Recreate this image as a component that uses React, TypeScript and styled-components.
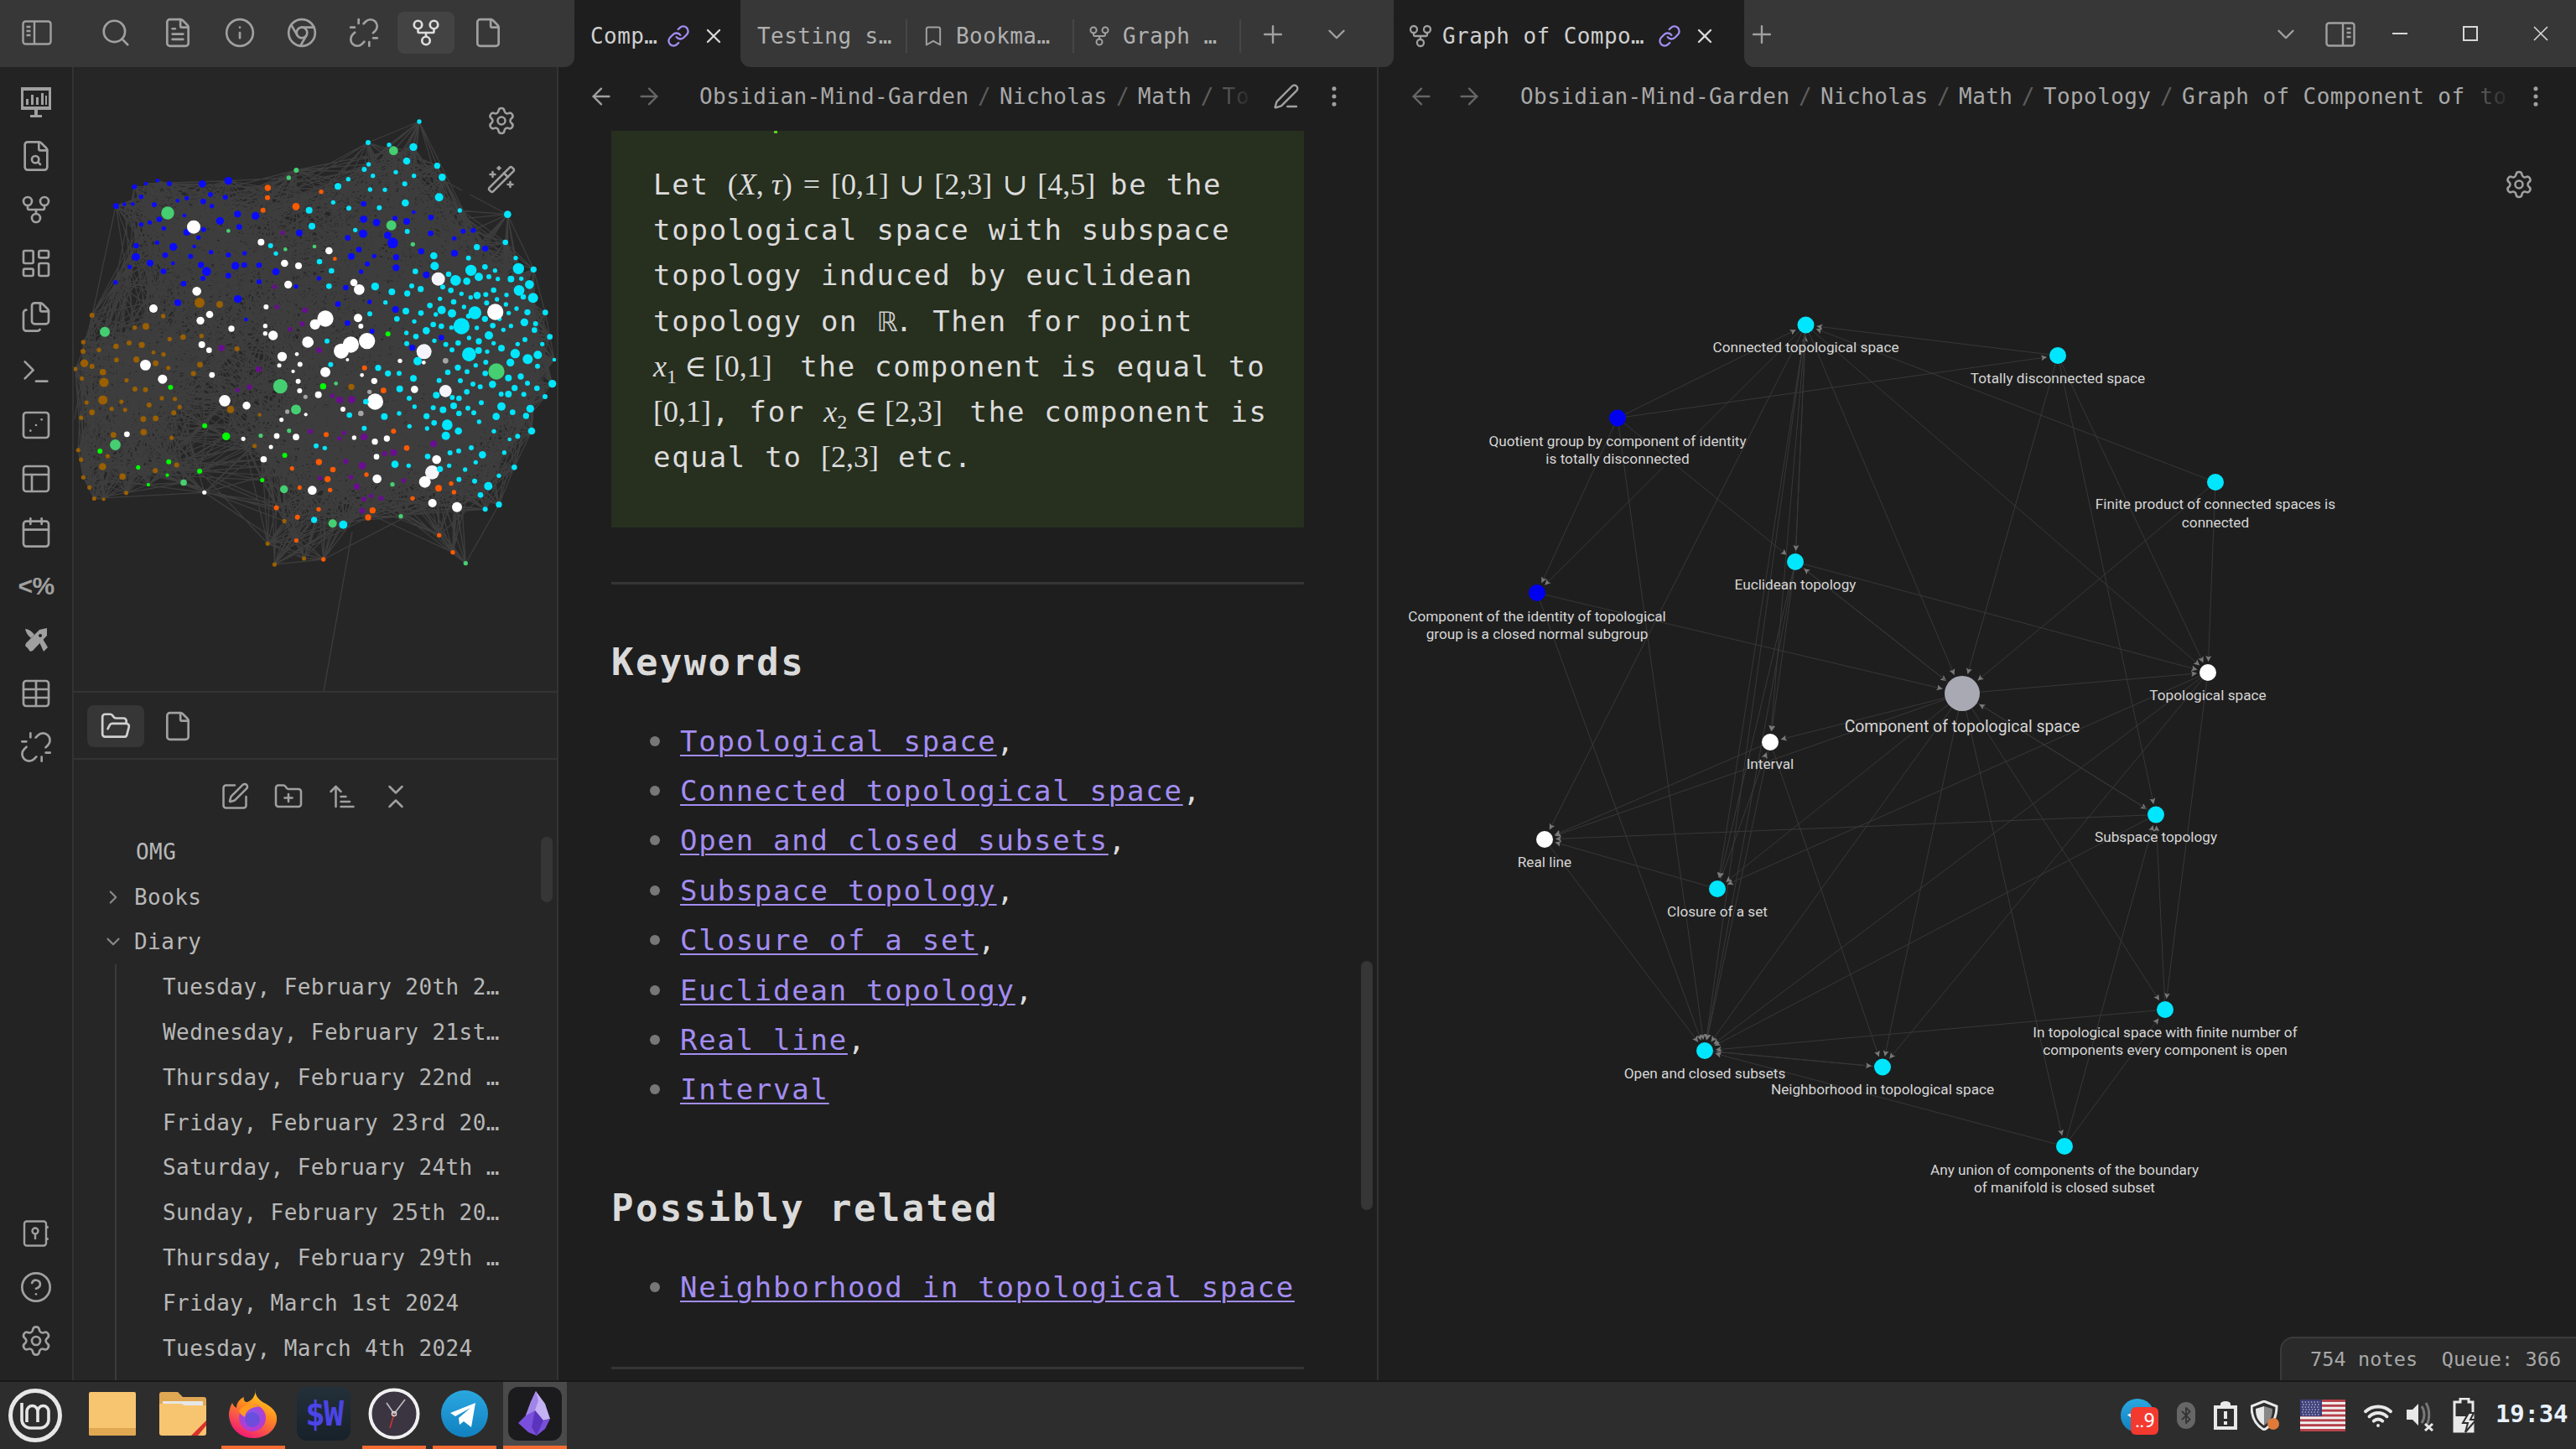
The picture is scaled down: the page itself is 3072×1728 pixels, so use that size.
import React from "react";
import styled, { createGlobalStyle } from "styled-components";
import {
  Search, FileText, Info, Chrome, Unlink, GitFork, File, FileSearch, LayoutDashboard, Files, Terminal, Dice3,
  PanelsTopLeft, Calendar, Table, CircleHelp, Settings, FolderOpen, SquarePen, FolderPlus, ArrowUpNarrowWide,
  ChevronsDownUp, ChevronRight, ChevronDown, WandSparkles, Link, PenLine, EllipsisVertical, ArrowLeft, ArrowRight,
  Plus, X, Bookmark, Wifi, Bluetooth,
} from "lucide-react";

const MONO = `"DejaVu Sans Mono", "Liberation Mono", monospace`;
const GREY = "#a0a0a0";
const ACCENT = "#a38df2";

const Global = createGlobalStyle`
  html, body { margin: 0; padding: 0; background: #1e1e1e; }
  * { box-sizing: border-box; }
  ul { margin: 0; padding: 0; list-style: none; }
`;

const Page = styled.div`
  width: 3072px; height: 1728px; overflow: hidden; display: flex; flex-direction: column;
  background: #1e1e1e; font-family: ${MONO}; color: #dcdcdc;
`;

/* ---------- title bar ---------- */
const TitleBar = styled.div`display: flex; height: 80px; background: #1e1e1e; flex: none;`;
const LeftSeg = styled.div`
  width: 685px; background: #373737; border-radius: 0 0 12px 0; display: flex; padding-top: 14px; align-items: flex-start; gap: 6px;
`;
const ToolSpacer = styled.div`width: 4px; flex: none;`;
const ToolBtn = styled.div<{ $on?: boolean; $w?: number }>`
  width: ${(p) => p.$w ?? 68}px; height: 50px; border-radius: 8px; display: flex; align-items: center; justify-content: center;
  color: ${(p) => (p.$on ? "#dcdcdc" : GREY)}; background: ${(p) => (p.$on ? "#434343" : "transparent")};
`;
const ActiveTab = styled.div<{ $w: number; $pad: number }>`
  width: ${(p) => p.$w}px; height: 66px; margin-top: 14px; background: #1e1e1e; border-radius: 16px 16px 0 0;
  display: flex; align-items: center; padding: 0 0 8px ${(p) => p.$pad}px; flex: none; color: ${GREY};
`;
const TabText = styled.span<{ $dim?: boolean }>`
  font-size: 26px; letter-spacing: 0.42px; white-space: nowrap; color: ${(p) => (p.$dim ? "#b0b0b0" : "#cfcfcf")};
`;
const TabLink = styled.span<{ $gap: number }>`margin-left: ${(p) => p.$gap}px; display: flex; color: ${ACCENT};`;
const TabClose = styled.span`margin-left: 14px; display: flex; color: #d8d8d8;`;
const TabIcon = styled.span`display: flex; margin-right: 10px;`;
const Strip = styled.div<{ $grow?: boolean; $radius: string }>`
  background: #373737; display: flex; align-items: center; height: 80px;
  border-radius: ${(p) => p.$radius}; ${(p) => (p.$grow ? "flex: 1;" : "width: 779px; flex: none;")}
`;
const Tab = styled.div<{ $pad: number; $gap?: number }>`
  width: 199px; height: 40px; display: flex; align-items: center; border-right: 2px solid #464646; overflow: hidden;
  padding-left: ${(p) => p.$pad}px; gap: ${(p) => p.$gap ?? 0}px; color: ${GREY}; flex: none; margin-top: 6px;
`;
const StripBtn = styled.div<{ $w: number }>`
  width: ${(p) => p.$w}px; display: flex; justify-content: center; align-items: center; color: ${GREY}; flex: none; margin-top: 2px;
`;
const WinBtn = styled.div`width: 84px; display: flex; justify-content: center; align-items: center; color: #d8d8d8; flex: none; margin-top: -1px;`;
const Spacer = styled.div`flex: 1;`;
const PaneGap = styled.div`flex: 0 0 2px;`;

/* ---------- workspace ---------- */
const Workspace = styled.div`flex: 1; display: flex; min-height: 0;`;
const Ribbon = styled.div`
  width: 88px; flex: none; background: #232323; border-right: 2px solid #333; display: flex; flex-direction: column;
  justify-content: space-between; padding: 10px 0 15px;
`;
const RibbonGroup = styled.div`display: flex; flex-direction: column;`;
const RibbonBtn = styled.div`height: 64.1px; display: flex; align-items: center; justify-content: center; color: ${GREY};`;
const PercentIcon = styled.span`font-family: "Liberation Sans", sans-serif; font-weight: 700; font-size: 30px; color: ${GREY}; letter-spacing: -0.5px;`;

const Sidebar = styled.div`
  width: 578px; flex: none; background: #262626; border-right: 2px solid #333; display: flex; flex-direction: column; position: relative; min-height: 0;
`;
const GraphBox = styled.div`height: 746px; position: relative; overflow: hidden; border-bottom: 2px solid #333; flex: none;`;
const GraphControls = styled.div`
  position: absolute; top: 0; right: 0; width: 113px; height: 152px; background: #262626; padding: 46px 0 0 28px; color: ${GREY};
  display: flex; flex-direction: column; gap: 34px;
`;
const FileTabs = styled.div`height: 80px; flex: none; border-bottom: 2px solid #333; display: flex; align-items: center; padding: 2px 0 0 16px; gap: 6px;`;
const FileTabBtn = styled.div<{ $on?: boolean }>`
  width: 68px; height: 50px; border-radius: 8px; display: flex; align-items: center; justify-content: center;
  background: ${(p) => (p.$on ? "#363636" : "transparent")}; color: ${(p) => (p.$on ? "#d0d0d0" : GREY)};
`;
const NavRow = styled.div`height: 82px; flex: none; display: flex; align-items: center; padding: 6px 0 0 174px; gap: 28px; color: ${GREY};`;
const Tree = styled.div`flex: 1; min-height: 0; overflow: hidden; display: grid; grid-auto-rows: 53.8px; padding-top: 1px;`;
const TreeRow = styled.div<{ $pad: number }>`
  display: flex; align-items: center; padding-left: ${(p) => p.$pad}px; font-size: 26px; letter-spacing: 0.42px; color: #b8b8b8; white-space: nowrap; gap: 12px;
`;
const TreeChildren = styled.div`margin-left: 49px; border-left: 2px solid #3a3a3a; grid-row: span 10; display: grid; grid-auto-rows: 53.8px;`;
const Chevron = styled.span`display: flex; color: #8a8a8a;`;
const ScrollThumb = styled.div<{ $x: number; $y: number; $w: number; $h: number }>`
  position: absolute; left: ${(p) => p.$x}px; top: ${(p) => p.$y}px; width: ${(p) => p.$w}px; height: ${(p) => p.$h}px;
  border-radius: 7px; background: #363636;
`;

const NotePane = styled.div`
  width: 978px; flex: none; border-right: 2px solid #333; position: relative; overflow: hidden; background: #1e1e1e;
`;
const Header = styled.div`height: 76px; display: flex; align-items: center; padding-bottom: 6px; color: #9a9a9a;`;
const NavArrow = styled.span<{ $dim?: boolean; $w: number }>`
  width: ${(p) => p.$w}px; display: flex; justify-content: center; color: ${(p) => (p.$dim ? "#666" : "#a0a0a0")}; flex: none;
  svg { flex: none; }
`;
const CrumbGap = styled.span<{ $w: number }>`flex: 0 0 ${(p) => p.$w}px;`;
const Crumb = styled.span`font-size: 26px; letter-spacing: 0.42px; color: #a8a8a8; white-space: nowrap;`;
const Slash = styled.span`font-size: 26px; color: #5c5c5c; width: 36.5px; text-align: center; flex: none;`;
const FadeCrumb = styled(Crumb)<{ $w: number; $left?: number }>`
  width: ${(p) => p.$w}px; margin-left: ${(p) => p.$left ?? 0}px; flex: none;
  -webkit-mask-image: linear-gradient(90deg, rgba(0,0,0,.45), rgba(0,0,0,.03));
  mask-image: linear-gradient(90deg, rgba(0,0,0,.45), rgba(0,0,0,.03));
`;
const HeadBtn = styled.span<{ $w: number }>`width: ${(p) => p.$w}px; display: flex; justify-content: center; color: ${GREY}; flex: none;`;
const NoteBody = styled.div`padding-left: 63px; width: 889px; font-size: 34px; letter-spacing: 1.74px;`;
const Callout = styled.div`background: #272f1f; padding: 37px 0 57px 50px; position: relative; height: 473px;`;
const Speck = styled.i`position: absolute; left: 194px; top: 0; width: 4px; height: 3px; background: #5fd01f;`;
const Line = styled.div`height: 54.2px; line-height: 54.2px; white-space: pre; color: #dcdcdc;`;
const MathSpan = styled.span<{ $w: number }>`
  display: inline-block; width: ${(p) => p.$w}px; font-family: "Liberation Serif", "DejaVu Serif", serif; font-size: 36px; letter-spacing: 0;
  white-space: nowrap; vertical-align: baseline; line-height: 1;
`;
const Var = styled.em`font-style: italic;`;
const Op = styled.span<{ $m: number }>`margin: 0 ${(p) => p.$m}px;`;
const Lower = styled.sub`font-size: 24px; line-height: 0; font-style: normal;`;
const Blackboard = styled.span`font-family: "DejaVu Sans", sans-serif; letter-spacing: 0; font-size: 32px; color: #cfcfcf; display: inline-block; width: 22.2px;`;
const Rule = styled.div<{ $top: number }>`height: 3px; background: #353535; margin-top: ${(p) => p.$top}px;`;
const Heading = styled.h2<{ $top: number }>`
  margin: ${(p) => p.$top}px 0 34px; height: 60px; line-height: 60px; font-size: 44px; font-weight: 700; letter-spacing: 2.4px; color: #dadada;
`;
const Item = styled.li`height: 59.4px; display: flex; align-items: center; padding-left: 46px; gap: 24px; white-space: pre;`;
const Dot = styled.i`width: 12px; height: 12px; border-radius: 50%; background: #777; flex: none;`;
const NoteLink = styled.span`color: ${ACCENT}; text-decoration: underline; text-underline-offset: 4px; text-decoration-thickness: 2px;`;

const GraphPane = styled.div`flex: 1; min-width: 0; position: relative; display: flex; flex-direction: column; background: #1e1e1e;`;
const GraphGear = styled.div`position: absolute; right: 50px; top: 122px; color: ${GREY}; display: flex;`;
const StatusBar = styled.div`
  position: absolute; right: 0; bottom: 0; width: 353px; height: 52px; background: #2a2a2a; border: 2px solid #3a3a3a; border-width: 2px 0 0 2px;
  border-radius: 16px 0 0 0; padding-left: 34px; display: flex; align-items: center; font-size: 23.5px; letter-spacing: 0.1px; color: #a8a8a8; white-space: pre;
`;

/* ---------- taskbar ---------- */
const Taskbar = styled.div`
  height: 82px; flex: none; background: #2d2d2d; border-top: 2px solid #181818; display: flex; align-items: stretch;
`;
const MintSlot = styled.div`width: 90px; display: flex; align-items: center; padding-left: 9px; flex: none;`;
const Apps = styled.div`display: flex; gap: 8px; margin-left: 6px;`;
const AppSlot = styled.div<{ $run?: boolean; $on?: boolean }>`
  width: 76px; position: relative; display: flex; align-items: center; justify-content: center; padding-bottom: 4px; background: ${(p) => (p.$on ? "#4a4a4a" : "transparent")};
  &::after { content: ""; position: absolute; left: 0; right: 0; bottom: 0; height: 4px; background: ${(p) => (p.$run ? "#f56b32" : "transparent")}; }
`;
const Tray = styled.div`margin-left: auto; display: flex; align-items: center;`;
const TrayItem = styled.div<{ $w: number }>`width: ${(p) => p.$w}px; display: flex; justify-content: center; align-items: center; position: relative; color: #e8e8e8;`;
const TgBadge = styled.span`
  position: absolute; left: 22px; top: 10px; width: 33px; height: 33px; background: #f4392f; border-radius: 6px; color: #fff;
  font-family: "Roboto", sans-serif; font-size: 24px; line-height: 32px; text-align: center; letter-spacing: -1px;
`;
const BtPill = styled.span`width: 22px; height: 32px; border-radius: 11px; background: #666; display: flex; align-items: center; justify-content: center; color: #333;`;
const TrayClock = styled.span`font-size: 29px; font-weight: 700; color: #e8f1fb; padding-left: 5px; letter-spacing: -0.2px; width: 101px; white-space: nowrap; margin-top: -4px;`;
const DollarW = styled.span`font-family: "DejaVu Sans Mono", monospace; font-weight: 700; font-size: 40px; color: #4b44e6; letter-spacing: -2px;`;
const TileRound = styled.div`width: 64px; height: 64px; border-radius: 12px; background: linear-gradient(180deg,#243039,#17212a); display: flex; align-items: center; justify-content: center;`;

/* ---------- sidebar graph data ---------- */
type Node = { x: number; y: number; r: number; c: string };
const BLUE = "#0a0aff", CY = "#00e6ff", GR = "#45cf72", WH = "#ffffff", PU = "#6a0d91", BR = "#9a5f00", OR = "#ff5a00", LI = "#00ff00", GY = "#a5a5a5", SN = "#f4f4fa";
const nodes: Node[] = [];
const add = (ox: number, oy: number, sx: number, sy: number, c: string, data: string) => {
  data.trim().split(/;\s*/).forEach((t) => {
    if (!t) return;
    const [a, b, r] = t.split(",").map(Number);
    nodes.push({ x: ox + a / sx, y: oy + b / sy, r: r / ((sx + sy) / 2), c });
  });
};
// upper left
add(80,130,3,3,BLUE,"241,278,9;282,267,7;323,256,7;366,267,9;484,268,13;577,257,14;265,314,8;312,342,9;395,328,7;428,319,8;513,306,9;487,331,10;566,316,9;518,347,8;175,347,10;205,341,7;235,340,7;420,381,7;330,395,10;296,406,8;265,413,8;346,427,8;610,376,12;674,382,14;547,400,14;488,431,9;616,422,10;428,441,12;470,460,8;322,478,8;247,489,10;380,493,14;455,492,7;515,512,8;635,516,8;351,523,10;246,529,14;442,527,9;577,522,9;831,443,12;297,551,12;379,552,7;224,565,8;479,558,11;602,561,14;634,558,10;687,559,10;499,581,16;345,581,10;747,582,13;486,606,9;577,596,10;173,620,8;417,625,10;687,618,9;819,635,8;396,693,12;611,680,14;640,753,7");
add(80,130,3,3,GR,"360,372,23;577,436,7;793,246,8;820,219,9;135,797,18;781,502,7;885,492,7");
add(80,130,3,3,OR,"718,282,11;717,317,9;701,362,9;819,349,13");
add(80,130,3,3,CY,"866,362,12;876,419,12;728,489,9;747,517,8");
add(80,130,3,3,WH,"453,422,24;694,476,12;778,552,13;828,561,12;791,628,14;464,652,16;712,708,9;309,714,15;510,735,13;477,757,14;709,776,8;588,786,11;709,803,8;737,810,17;482,843,12;508,863,10;861,834,20;887,770,18;769,885,16;822,877,7");
add(80,130,3,3,PU,"771,443,8;742,636,8;751,708,8;851,720,10;841,769,9;798,788,8;553,855,11");
add(80,130,3,3,BR,"474,693,18;546,699,12;89,738,9;344,741,8;282,778,12;242,782,8;481,812,8;415,816,10;367,823,8;58,834,8;267,844,11;222,837,9;175,849,10;114,862,8;57,867,9;309,871,7;345,878,8;608,858,9;248,895,10;177,897,8");
// upper right
add(370,130,3,3,CY,"390,45,8;207,120,9;282,128,8;369,136,14;345,186,13;209,198,8;193,216,9;454,203,11;472,244,13;224,239,8;306,226,8;371,239,8;136,251,8;99,277,12;338,268,9;214,288,8;267,289,8;461,316,15;82,334,8;340,336,13;138,355,9;247,353,9;535,363,8;706,377,13;347,438,9;161,433,8;698,477,10;596,494,11;442,525,13;566,533,9;735,533,8;445,562,15;33,546,10;76,579,10;376,581,10;625,565,10;575,577,20;661,578,8;745,571,20;799,574,11;495,591,10;603,601,15;639,600,9;520,613,19;560,616,13;671,608,8;718,608,12;755,607,8;784,628,16;67,634,10;232,635,14;474,637,9;363,633,9;395,644,11;503,649,10;656,648,10;292,654,12;347,660,11;747,649,19;797,676,18;541,661,8;597,667,13;628,664,9;574,674,8;702,665,8;762,672,10;464,679,8;513,690,10;668,681,8;631,694,9;700,699,8;269,692,8;428,703,10;550,708,8;738,714,8;342,723,12;470,719,15;507,731,15;589,729,23;396,730,10;777,727,11;710,730,8;449,735,8;841,728,10;213,733,9;310,751,10;566,741,9;625,751,11;372,760,8;677,751,8;541,777,29;440,771,10;469,777,10;505,782,8;766,763,14;806,768,9;718,776,8;653,775,10;596,783,8;691,790,8;802,791,10;415,793,13;344,801,8");
add(370,130,3,3,BLUE,"191,339,10;370,369,7;303,391,9;432,388,10;191,394,13;237,406,13;345,402,12;547,437,9;583,434,9;431,445,10;189,446,15;134,461,10;277,452,13;295,479,19;515,463,8;174,503,10;626,499,11;147,527,12;229,526,8;307,530,11;397,509,11;516,516,12;204,554,9;307,568,12;182,582,8;415,593,12;31,606,8;127,639,10;99,698,10;212,690,8;305,717,12;133,766,10;221,795,9");
add(370,130,3,3,GR,"298,149,16;290,416,18;367,484,8");
add(370,130,3,3,OR,"39,296,8;88,536,7");
add(370,130,3,3,WH,"67,507,13;156,621,13;175,646,19;662,726,29;54,750,29;17,771,18;171,748,15;181,777,9");
add(370,130,3,3,SN,"458,608,24");
add(370,130,3,3,LI,"278,805,9");
// lower right
add(370,400,3,3,WH,"0,25,12;145,33,29;111,56,27;203,20,29;133,87,6;321,91,8;406,97,7;54,131,18;185,142,7;229,163,11;373,193,13;29,212,12;232,237,29;117,264,9;157,366,8;231,380,11;274,369,11;237,434,10;452,444,16;410,524,21;239,513,16;7,554,16;437,600,15;525,614,18");
add(370,400,3,3,SN,"407,58,27;484,199,22;436,490,25");
add(370,400,3,3,GY,"484,91,10;212,202,8;181,279,10");
add(370,400,3,3,PU,"32,53,10;79,216,8;105,231,12;148,230,13;120,349,8;104,369,8;192,363,12;2,344,8;441,388,12;266,423,9;298,419,12;127,451,9;186,466,13;35,511,8;146,507,8;334,519,8;166,541,11;218,574,8;253,583,9;192,586,9;186,627,10");
add(370,400,3,3,BR,"147,184,11");
add(370,400,3,3,LI,"46,182,11");
add(370,400,3,3,GR,"92,172,7;666,129,29;294,533,8;324,647,8;80,673,15;556,815,8");
add(370,400,3,3,OR,"194,116,9;262,197,10;57,355,9;298,343,9;345,403,10;31,453,11;81,480,10;201,498,8;62,514,11;71,553,8;459,547,12;504,530,8;514,561,8;366,583,8;30,622,8;223,626,11;207,651,11;461,715,8;510,776,8;47,801,8");
add(370,400,3,3,BLUE,"469,8,10;365,44,11");
add(370,400,3,3,CY,"60,20,9;345,29,9;378,4,10;444,19,8;485,32,9;529,27,10;507,52,9;568,9,8;603,21,11;639,0,15;656,28,8;684,46,12;742,31,8;768,15,9;830,31,8;857,5,10;568,68,25;602,54,12;633,58,8;733,65,17;814,70,15;778,85,18;873,87,7;716,97,14;813,110,9;73,104,9;384,92,15;592,107,8;628,96,9;243,116,11;278,136,11;318,136,9;492,132,10;528,115,11;561,130,9;626,136,10;709,152,12;753,147,11;369,154,12;461,161,9;537,162,9;582,174,9;608,184,9;652,175,13;731,188,11;777,171,9;811,189,10;866,173,14;320,191,12;451,214,12;560,202,10;683,210,9;709,210,12;764,211,9;840,219,9;354,225,9;508,222,9;532,225,10;612,241,9;199,237,10;373,255,8;440,259,9;475,266,12;513,252,12;564,260,9;684,254,15;787,262,14;140,285,10;265,290,12;318,279,8;416,289,11;532,279,10;585,277,9;665,290,13;724,275,10;772,288,11;443,313,10;490,320,19;604,309,8;355,325,8;418,333,8;193,332,9;530,342,13;485,359,15;657,343,8;792,342,13;742,361,9;713,372,7;21,395,9;52,403,8;576,402,9;531,413,9;500,420,9;694,419,8;420,433,10;616,427,13;303,461,13;352,466,8;592,454,8;497,466,8;464,478,11;730,472,10;554,480,8;675,502,8;532,515,9;588,521,9;637,539,15;609,571,10;675,605,11;626,622,9;14,660,11;118,677,15");
// lower left, from the wider crop
const Z4X = 2.306, Z4Y = 2.376;
add(0,400,Z4X,Z4Y,WH,"400,84,15;776,60,13;825,82,7;768,85,6;806,102,5;447,124,13;583,112,8;820,130,7;824,157,7;618,185,16;678,199,11;349,280,8;669,293,6;761,285,8;814,288,9;745,316,6;725,351,9;841,224,5;774,239,6;562,445,6");
add(0,400,Z4X,Z4Y,BR,"232,79,11;375,69,8;320,70,6;253,88,7;428,79,8;283,104,9;550,83,8;463,92,6;225,122,6;348,127,6;532,108,7;286,133,13;207,95,6;400,154,7;371,152,7;445,178,6;481,180,6;283,183,13;238,190,6;334,188,6;410,197,7;253,218,8;307,208,6;344,211,6;494,203,6;634,210,10;478,219,7;714,225,5;223,233,6;394,237,8;428,235,8;312,282,8;395,274,9;472,290,6;700,313,6;215,325,6;223,352,6;296,342,6;282,372,10;486,367,7;427,383,7;229,402,6;337,400,9;246,431,6;347,446,6;259,462,6;285,464,5;782,526,6;736,590,6;836,632,6;755,649,6");
add(0,400,Z4X,Z4Y,PU,"653,155,6;686,146,7;711,96,8;852,272,6");
add(0,400,Z4X,Z4Y,GR,"771,144,20;317,310,15;717,284,6;795,270,6;814,210,14;781,436,11;505,417,9");
add(0,400,Z4X,Z4Y,LI,"469,147,7;563,256,7;622,286,11;275,328,7;380,374,6;464,358,7;549,385,7;460,396,5;408,423,5;721,410,6;783,340,7");
add(0,400,Z4X,Z4Y,OR,"803,377,6;824,431,6;760,488,7;818,515,7;815,581,6");
add(0,400,Z4X,Z4Y,GY,"840,174,6;790,216,6");

const buildEdges = () => {
  let seed = 12345;
  const rnd = () => { seed = (seed * 1103515245 + 12345) & 0x7fffffff; return seed / 0x7fffffff; };
  let d = "M420 634L385 830M244 587L330 605M138 246L110 376M110 376L89 500M372 640L340 655";
  nodes.forEach((n, i) => {
    const near: number[] = [], mid: number[] = [];
    nodes.forEach((m, j) => {
      if (i === j) return;
      const dist = Math.hypot(m.x - n.x, m.y - n.y);
      if (dist < 62) near.push(j); else if (dist < 150) mid.push(j);
    });
    const pick = (arr: number[], k: number) => {
      for (let t = 0; t < k && arr.length; t++) {
        const m = nodes[arr[Math.floor(rnd() * arr.length)]];
        d += `M${n.x.toFixed(1)} ${n.y.toFixed(1)}L${m.x.toFixed(1)} ${m.y.toFixed(1)}`;
      }
    };
    pick(near, 5); pick(mid, 8);
  });
  return d;
};
const EDGE_PATH = buildEdges();

const SideGraph = () => (
  <svg width={578} height={744} viewBox="88 80 578 744" style={{ display: "block" }}>
    <path d={EDGE_PATH} stroke="#3d3d3d" strokeWidth={1.3} fill="none" />
    {nodes.map((n, i) => <circle key={i} cx={n.x} cy={n.y} r={n.r} fill={n.c} />)}
  </svg>
);

/* ---------- local graph ---------- */
type GN = { x: number; y: number; r: number; c: string; l: string[]; ly: number[]; big?: boolean };
const G: Record<string, GN> = {
  C: { x: 2153.5, y: 387.5, r: 10, c: CY, l: ["Connected topological space"], ly: [414] },
  T: { x: 2454, y: 424, r: 10, c: CY, l: ["Totally disconnected space"], ly: [451] },
  Q: { x: 1929, y: 498.5, r: 10, c: "#0000f0", l: ["Quotient group by component of identity", "is totally disconnected"], ly: [526, 547] },
  F: { x: 2642, y: 575, r: 10, c: CY, l: ["Finite product of connected spaces is", "connected"], ly: [601, 623] },
  E: { x: 2141, y: 670, r: 10, c: CY, l: ["Euclidean topology"], ly: [697] },
  I: { x: 1833, y: 707, r: 10, c: "#0000f0", l: ["Component of the identity of topological", "group is a closed normal subgroup"], ly: [735, 756] },
  M: { x: 2340, y: 827, r: 21, c: "#a9a9b4", l: ["Component of topological space"], ly: [866], big: true },
  P: { x: 2633, y: 802, r: 10, c: WH, l: ["Topological space"], ly: [829] },
  V: { x: 2111, y: 885, r: 10, c: WH, l: ["Interval"], ly: [911] },
  R: { x: 1842, y: 1001, r: 10, c: WH, l: ["Real line"], ly: [1028] },
  S: { x: 2571, y: 971.6, r: 10, c: CY, l: ["Subspace topology"], ly: [998] },
  L: { x: 2048, y: 1060, r: 10, c: CY, l: ["Closure of a set"], ly: [1087] },
  O: { x: 2033, y: 1253, r: 10, c: CY, l: ["Open and closed subsets"], ly: [1280] },
  N: { x: 2245, y: 1272.5, r: 10, c: CY, l: ["Neighborhood in topological space"], ly: [1299] },
  A: { x: 2582, y: 1204, r: 10, c: CY, l: ["In topological space with finite number of", "components every component is open"], ly: [1231, 1252] },
  U: { x: 2462, y: 1367, r: 10, c: CY, l: ["Any union of components of the boundary", "of manifold is closed subset"], ly: [1395, 1416] },
};
const GE = "T>C Q>C Q>T F>C Q>E Q>I C>I Q>O I>O C>R E>C C>E C>V C>L C>O C>M C>P T>M T>P T>S F>M F>P E>P E>M M>E I>M M>P M>V M>S S>M M>R V>R S>R L>R R>O V>O L>V M>L P>L S>O P>O M>O M>N V>N N>O O>N A>O U>O U>A U>S A>S M>A M>U P>N P>A E>V E>L E>O".split(" ");

const LocalGraph = () => (
  <svg width={1428} height={1490} viewBox="1644 156 1428 1490" style={{ display: "block" }}>
    <defs>
      <marker id="ah" markerWidth="8" markerHeight="8" refX="7" refY="4" orient="auto" markerUnits="userSpaceOnUse">
        <path d="M0 0.5L7 4L0 7.5L1.5 4Z" fill="#7a7a7a" />
      </marker>
    </defs>
    {GE.map((e) => {
      const [a, b] = e.split(">").map((k) => G[k]);
      const len = Math.hypot(b.x - a.x, b.y - a.y);
      const k = (len - b.r - 3) / len;
      return <line key={e} x1={a.x} y1={a.y} x2={a.x + (b.x - a.x) * k} y2={a.y + (b.y - a.y) * k} stroke="#383838" strokeWidth={1} markerEnd="url(#ah)" />;
    })}
    {Object.entries(G).map(([k, n]) => (
      <g key={k}>
        <circle cx={n.x} cy={n.y} r={n.r} fill={n.c} />
        {n.l.map((t, i) => (
          <text key={i} x={n.x} y={n.ly[i] + (n.big ? 7 : 6)} textAnchor="middle" fontFamily="Roboto, sans-serif" fontSize={n.big ? 19.4 : 17.2} fill="#d6d6d6">{t}</text>
        ))}
      </g>
    ))}
  </svg>
);

/* ---------- drawn icons ---------- */
const SidebarToggle = ({ mirror }: { mirror?: boolean }) => (
  <svg width="36" height="30" viewBox="0 0 36 30" fill="none" stroke="currentColor" strokeWidth="2.4" style={mirror ? { transform: "scaleX(-1)" } : undefined}>
    <rect x="1.5" y="1.5" width="33" height="27" rx="3" />
    <path d="M15 1.5V28.5" />
    <path d="M5.5 8H10.5M5.5 13H10.5M5.5 18H10.5" strokeWidth="2.6" />
  </svg>
);
const Presentation = () => (
  <svg width="36" height="36" viewBox="0 0 36 36" fill="currentColor">
    <path d="M0 0H36V27H0ZM3 4V23H33V4Z" fillRule="evenodd" />
    <path d="M6 14H9V21H6ZM12 9H15V21H12ZM18 12H21V21H18ZM24 7H27V21H24ZM29 10H31V21H29Z" />
    <path d="M16 27H20V33H25V36H11V33H16Z" />
  </svg>
);
const ToolsCross = () => (
  <svg width="30" height="30" viewBox="0 0 30 30" fill="currentColor">
    <path d="M28 1L28 10L11 28L8 29L5 25L2 22L3 19L19 3Z" />
    <path d="M2 2C6 2 10 5 13 9L9 13C5 10 3 6 2 2Z" />
    <path d="M19 18L23 14L29 24L24 29Z" />
    <path d="M20 8A2 2 0 1 0 20.1 8Z" fill="#232323" />
  </svg>
);
const Vault = () => (
  <svg width="32" height="32" viewBox="0 0 32 32" fill="none" stroke="currentColor" strokeWidth="2.4">
    <rect x="2" y="1.5" width="26" height="29" rx="3" />
    <circle cx="15" cy="13" r="3.5" /><path d="M15 17V23M29.5 7V10M29.5 21V24" />
  </svg>
);
const Minimize = () => <svg width="20" height="4" viewBox="0 0 20 4"><path d="M1 2H19" stroke="currentColor" strokeWidth="2" /></svg>;
const Maximize = () => <svg width="20" height="20" viewBox="0 0 20 20"><rect x="2" y="2" width="16" height="16" fill="none" stroke="currentColor" strokeWidth="2" /></svg>;
const CloseWin = () => <svg width="20" height="20" viewBox="0 0 20 20"><path d="M2 2L18 18M18 2L2 18" stroke="currentColor" strokeWidth="1.6" /></svg>;

const MintLogo = () => (
  <svg width="66" height="66" viewBox="0 0 66 66" fill="none" stroke="#e6e6e6">
    <circle cx="33" cy="33" r="29.5" strokeWidth="5" />
    <path d="M17 18V38a10 10 0 0 0 10 10H39a10 10 0 0 0 10-10V28a6.5 6.5 0 0 0-13 0V41M36 28a6.5 6.5 0 0 0-13 0V41" strokeWidth="3.6" />
  </svg>
);
const FilesApp = () => (
  <svg width="56" height="54" viewBox="0 0 56 54"><rect width="56" height="52" y="1" rx="2" fill="#f7c470" /><path d="M0 44H56V51a2 2 0 0 1-2 2H2a2 2 0 0 1-2-2Z" fill="#e1a853" /></svg>
);
const FolderApp = () => (
  <svg width="56" height="52" viewBox="0 0 56 52"><path d="M0 3a3 3 0 0 1 3-3H22L28 6H53a3 3 0 0 1 3 3V20H0Z" fill="#e1a853" /><rect x="4" y="11" width="48" height="10" fill="#e6e6e6" /><path d="M0 14H26L30 16H56V49a3 3 0 0 1-3 3H3a3 3 0 0 1-3-3Z" fill="#f7c470" /><path d="M38 52L56 34V40L46 52Z" fill="#d9322a" /></svg>
);
const Firefox = () => (
  <svg width="58" height="60" viewBox="0 0 58 60">
    <defs>
      <linearGradient id="ffa" x1="0.8" y1="0" x2="0.3" y2="1"><stop offset="0" stopColor="#ffe226" /><stop offset="0.45" stopColor="#ff8a1f" /><stop offset="1" stopColor="#f0157a" /></linearGradient>
      <radialGradient id="ffb" cx="0.5" cy="0.4"><stop offset="0" stopColor="#7a5cf0" /><stop offset="1" stopColor="#b53bd0" /></radialGradient>
    </defs>
    <path d="M32 0C30 8 36 14 44 18C54 24 58 30 57 38C55 51 43 59 29 59C13 59 1 47 0 32C0 26 2 20 4 17C5 20 7 22 9 23C9 17 13 12 18 10C17 14 19 16 22 16C28 14 32 8 32 0Z" fill="url(#ffa)" />
    <circle cx="28" cy="35" r="16" fill="url(#ffb)" />
    <path d="M12 27C17 19 28 16 36 22C30 21 20 25 19 34C16 32 13 30 12 27Z" fill="#ff9a1f" />
    <circle cx="28" cy="37" r="9" fill="#5b4fd8" opacity=".7" />
  </svg>
);
const ClockApp = () => (
  <svg width="62" height="62" viewBox="0 0 62 62" fill="none">
    <circle cx="31" cy="31" r="28.5" fill="#3b3542" stroke="#f0f0f0" strokeWidth="4" />
    <path d="M31 31L22 18M31 31L44 14" stroke="#bdbdbd" strokeWidth="1.6" />
    <path d="M31 31L26 48" stroke="#d33" strokeWidth="1.4" />
    <circle cx="31" cy="31" r="2.6" stroke="#ddd" strokeWidth="1.4" />
  </svg>
);
const Telegram = ({ s }: { s: number }) => (
  <svg width={s} height={s} viewBox="0 0 56 56">
    <defs><linearGradient id="tg" x1="0" y1="0" x2="0" y2="1"><stop offset="0" stopColor="#2aa8e0" /><stop offset="1" stopColor="#1180c0" /></linearGradient></defs>
    <circle cx="28" cy="28" r="28" fill="url(#tg)" />
    <path d="M11 27L41 15L36 44L27 37L22 41L21 33L35 21L17 31Z" fill="#fff" />
  </svg>
);
const ObsidianApp = () => (
  <svg width="64" height="64" viewBox="0 0 64 64">
    <rect width="64" height="64" rx="12" fill="#1b1b1d" />
    <path d="M33 5L44 20L50 38L42 40L21 34L27 18Z" fill="#c5b2f5" />
    <path d="M33 5L27 18L21 34L32 28L36 16Z" fill="#a184ea" />
    <path d="M21 34L32 28L42 40L50 38L44 50L34 58L24 54L12 43Z" fill="#7a4fdc" />
    <path d="M32 28L42 40L34 58L28 48Z" fill="#5b34bd" />
  </svg>
);
const ClipboardTray = () => (
  <svg width="28" height="34" viewBox="0 0 28 34"><path d="M0 5H8V3a6 3 0 0 1 12 0V5H28V34H0ZM4 9V30H24V9Z" fill="#e8e8e8" fillRule="evenodd" /><path d="M12 12H16V21H12ZM12 24H16V28H12Z" fill="#e8e8e8" /></svg>
);
const ShieldTray = () => (
  <svg width="36" height="36" viewBox="0 0 36 36"><path d="M16 1L31 7C31 20 27 29 16 35C5 29 1 20 1 7Z" fill="none" stroke="#e8e8e8" strokeWidth="3" /><path d="M16 7L26 10C26 20 23 25 16 30Z" fill="#888" /><path d="M16 7L6 10C6 20 9 25 16 30Z" fill="#e8e8e8" /><circle cx="27" cy="28" r="7" fill="#e07a3a" /></svg>
);
const FlagTray = () => (
  <svg width="54" height="38" viewBox="0 0 54 38">
    <rect width="54" height="38" rx="3" fill="#f2f2f2" />
    {[0, 2, 4, 6, 8, 10, 12].map((i) => <rect key={i} y={i * 2.92} width="54" height="2.92" fill="#b5404a" />)}
    <rect width="26" height="20" fill="#3d3f78" />
    <path d="M2 3H24M3 6H23M2 9H24M3 12H23M2 15H24M3 18H23" stroke="#e4e4f0" strokeWidth="1" strokeDasharray="1.6 2" />
  </svg>
);
const SpeakerTray = () => (
  <svg width="34" height="38" viewBox="0 0 34 38" fill="none"><path d="M1 12H8L15 5V31L8 24H1Z" fill="#e8e8e8" /><path d="M19 8C23 14 23 22 19 28M24 4C29 12 29 24 24 32" stroke="#777" strokeWidth="3" /><path d="M23 29L32 37M32 29L23 37" stroke="#e8e8e8" strokeWidth="3" /></svg>
);
const BatteryTray = () => (
  <svg width="30" height="42" viewBox="0 0 30 42" fill="none"><path d="M9 1H19V5H24V40H2V5H9Z" stroke="#e8e8e8" strokeWidth="3" /><path d="M2 22H24V40H2Z" fill="#e8e8e8" /><path d="M19 18L12 30H18L15 41L28 26H21L25 18Z" fill="#e8e8e8" stroke="#2d2d2d" strokeWidth="2" /></svg>
);

const IconP = { size: 38, strokeWidth: 1.7 } as const;
const RibbonP = { size: 40, strokeWidth: 1.6 } as const;
const NavP = { size: 32, strokeWidth: 1.8 } as const;

const LINKS = ["Topological space", "Connected topological space", "Open and closed subsets", "Subspace topology", "Closure of a set", "Euclidean topology", "Real line", "Interval"];
const DIARY = ["Tuesday, February 20th 2…", "Wednesday, February 21st…", "Thursday, February 22nd …", "Friday, February 23rd 20…", "Saturday, February 24th …", "Sunday, February 25th 20…", "Thursday, February 29th …", "Friday, March 1st 2024", "Tuesday, March 4th 2024"];

export default function App() {
  return (
    <Page>
      <Global />
      <TitleBar>
        <LeftSeg>
          <ToolBtn $w={88}><SidebarToggle /></ToolBtn>
          <ToolSpacer />
          <ToolBtn><Search {...IconP} /></ToolBtn>
          <ToolBtn><FileText {...IconP} /></ToolBtn>
          <ToolBtn><Info {...IconP} /></ToolBtn>
          <ToolBtn><Chrome {...IconP} /></ToolBtn>
          <ToolBtn><Unlink {...IconP} /></ToolBtn>
          <ToolBtn $on><GitFork {...IconP} /></ToolBtn>
          <ToolBtn><File {...IconP} /></ToolBtn>
        </LeftSeg>
        <ActiveTab $w={198} $pad={19}>
          <TabText>Comp…</TabText>
          <TabLink $gap={11}><Link size={28} strokeWidth={2} /></TabLink>
          <TabClose><X size={28} strokeWidth={2} /></TabClose>
        </ActiveTab>
        <Strip $radius="0 0 12px 12px">
          <Tab $pad={20}><TabText $dim>Testing s…</TabText></Tab>
          <Tab $pad={17} $gap={13}><Bookmark size={28} strokeWidth={1.7} /><TabText $dim>Bookma…</TabText></Tab>
          <Tab $pad={16} $gap={14}><GitFork size={28} strokeWidth={1.7} /><TabText $dim>Graph …</TabText></Tab>
          <StripBtn $w={76}><Plus size={34} strokeWidth={1.7} /></StripBtn>
          <StripBtn $w={76}><ChevronDown size={34} strokeWidth={1.7} /></StripBtn>
        </Strip>
        <PaneGap />
        <ActiveTab $w={416} $pad={14}>
          <TabIcon><GitFork size={32} strokeWidth={1.7} /></TabIcon>
          <TabText>Graph of Compo…</TabText>
          <TabLink $gap={16}><Link size={28} strokeWidth={2} /></TabLink>
          <TabClose><X size={28} strokeWidth={2} /></TabClose>
        </ActiveTab>
        <Strip $grow $radius="0 0 0 12px">
          <StripBtn $w={42}><Plus size={34} strokeWidth={1.7} /></StripBtn>
          <Spacer />
          <StripBtn $w={72}><ChevronDown size={34} strokeWidth={1.7} /></StripBtn>
          <StripBtn $w={58}><SidebarToggle mirror /></StripBtn>
          <WinBtn><Minimize /></WinBtn>
          <WinBtn><Maximize /></WinBtn>
          <WinBtn><CloseWin /></WinBtn>
        </Strip>
      </TitleBar>

      <Workspace>
        <Ribbon>
          <RibbonGroup>
            <RibbonBtn><Presentation /></RibbonBtn>
            <RibbonBtn><FileSearch {...RibbonP} /></RibbonBtn>
            <RibbonBtn><GitFork {...RibbonP} /></RibbonBtn>
            <RibbonBtn><LayoutDashboard {...RibbonP} /></RibbonBtn>
            <RibbonBtn><Files {...RibbonP} /></RibbonBtn>
            <RibbonBtn><Terminal {...RibbonP} /></RibbonBtn>
            <RibbonBtn><Dice3 {...RibbonP} /></RibbonBtn>
            <RibbonBtn><PanelsTopLeft {...RibbonP} /></RibbonBtn>
            <RibbonBtn><Calendar {...RibbonP} /></RibbonBtn>
            <RibbonBtn><PercentIcon>{"<%"}</PercentIcon></RibbonBtn>
            <RibbonBtn><ToolsCross /></RibbonBtn>
            <RibbonBtn><Table {...RibbonP} /></RibbonBtn>
            <RibbonBtn><Unlink {...RibbonP} /></RibbonBtn>
          </RibbonGroup>
          <RibbonGroup>
            <RibbonBtn><Vault /></RibbonBtn>
            <RibbonBtn><CircleHelp {...RibbonP} /></RibbonBtn>
            <RibbonBtn><Settings {...RibbonP} /></RibbonBtn>
          </RibbonGroup>
        </Ribbon>

        <Sidebar>
          <GraphBox>
            <SideGraph />
            <GraphControls>
              <Settings {...IconP} />
              <WandSparkles {...IconP} />
            </GraphControls>
          </GraphBox>
          <FileTabs>
            <FileTabBtn $on><FolderOpen {...IconP} /></FileTabBtn>
            <FileTabBtn><File {...IconP} /></FileTabBtn>
          </FileTabs>
          <NavRow>
            <SquarePen size={36} strokeWidth={1.7} />
            <FolderPlus size={36} strokeWidth={1.7} />
            <ArrowUpNarrowWide size={36} strokeWidth={1.7} />
            <ChevronsDownUp size={36} strokeWidth={1.7} />
          </NavRow>
          <Tree>
            <TreeRow $pad={74}>OMG</TreeRow>
            <TreeRow $pad={34}><Chevron><ChevronRight size={26} strokeWidth={2} /></Chevron>Books</TreeRow>
            <TreeRow $pad={34}><Chevron><ChevronDown size={26} strokeWidth={2} /></Chevron>Diary</TreeRow>
            <TreeChildren>
              {DIARY.map((d) => <TreeRow key={d} $pad={55}>{d}</TreeRow>)}
            </TreeChildren>
          </Tree>
          <ScrollThumb $x={557} $y={918} $w={14} $h={78} />
        </Sidebar>

        <NotePane>
          <Header>
            <NavArrow $w={102}><ArrowLeft {...NavP} /></NavArrow>
            <NavArrow $dim $w={12}><ArrowRight {...NavP} /></NavArrow>
            <CrumbGap $w={54} />
            <Crumb>Obsidian-Mind-Garden</Crumb><Slash>/</Slash>
            <Crumb>Nicholas</Crumb><Slash>/</Slash>
            <Crumb>Math</Crumb><Slash>/</Slash>
            <FadeCrumb $w={36}>To</FadeCrumb>
            <HeadBtn $w={81}><PenLine {...NavP} /></HeadBtn>
            <HeadBtn $w={33}><EllipsisVertical {...NavP} /></HeadBtn>
          </Header>
          <NoteBody>
            <Callout>
              <Speck />
              <Line>Let <MathSpan $w={434}>(<Var>X</Var>, <Var>τ</Var>)<Op $m={13}>=</Op>[0,1]<Op $m={12}>∪</Op>[2,3]<Op $m={12}>∪</Op>[4,5]</MathSpan> be the</Line>
              <Line>topological space with subspace</Line>
              <Line>topology induced by euclidean</Line>
              <Line>topology on <Blackboard>ℝ</Blackboard>. Then for point</Line>
              <Line><MathSpan $w={153}><Var>x</Var><Lower>1</Lower><Op $m={9}>∈</Op>[0,1]</MathSpan> the component is equal to</Line>
              <Line><MathSpan $w={70}>[0,1]</MathSpan>, for <MathSpan $w={152}><Var>x</Var><Lower>2</Lower><Op $m={9}>∈</Op>[2,3]</MathSpan> the component is</Line>
              <Line>equal to <MathSpan $w={70}>[2,3]</MathSpan> etc.</Line>
            </Callout>
            <Rule $top={65} />
            <Heading $top={63}>Keywords</Heading>
            <ul>
              {LINKS.map((l, i) => (
                <Item key={l}><Dot /><span><NoteLink>{l}</NoteLink>{i < LINKS.length - 1 ? "," : ""}</span></Item>
              ))}
            </ul>
            <Heading $top={82}>Possibly related</Heading>
            <ul>
              <Item><Dot /><NoteLink>Neighborhood in topological space</NoteLink></Item>
            </ul>
            <Rule $top={65} />
          </NoteBody>
          <ScrollThumb $x={957} $y={1066} $w={14} $h={297} />
        </NotePane>

        <GraphPane>
          <Header>
            <NavArrow $dim $w={102}><ArrowLeft {...NavP} /></NavArrow>
            <NavArrow $dim $w={12}><ArrowRight {...NavP} /></NavArrow>
            <CrumbGap $w={55} />
            <Crumb>Obsidian-Mind-Garden</Crumb><Slash>/</Slash>
            <Crumb>Nicholas</Crumb><Slash>/</Slash>
            <Crumb>Math</Crumb><Slash>/</Slash>
            <Crumb>Topology</Crumb><Slash>/</Slash>
            <Crumb>Graph of Component of</Crumb>
            <FadeCrumb $w={36} $left={18}>to</FadeCrumb>
            <HeadBtn $w={60}><EllipsisVertical {...NavP} /></HeadBtn>
          </Header>
          <LocalGraph />
          <GraphGear><Settings size={36} strokeWidth={1.7} /></GraphGear>
          <StatusBar>754 notes  Queue: 366</StatusBar>
        </GraphPane>
      </Workspace>

      <Taskbar>
        <MintSlot><MintLogo /></MintSlot>
        <Apps>
          <AppSlot><FilesApp /></AppSlot>
          <AppSlot><FolderApp /></AppSlot>
          <AppSlot $run><Firefox /></AppSlot>
          <AppSlot><TileRound><DollarW>$W</DollarW></TileRound></AppSlot>
          <AppSlot $run><ClockApp /></AppSlot>
          <AppSlot $run><Telegram s={56} /></AppSlot>
          <AppSlot $run $on><ObsidianApp /></AppSlot>
        </Apps>
        <Tray>
          <TrayItem $w={60}><Telegram s={40} /><TgBadge>..9</TgBadge></TrayItem>
          <TrayItem $w={56}><BtPill><Bluetooth size={24} strokeWidth={2} /></BtPill></TrayItem>
          <TrayItem $w={38}><ClipboardTray /></TrayItem>
          <TrayItem $w={58}><ShieldTray /></TrayItem>
          <TrayItem $w={78}><FlagTray /></TrayItem>
          <TrayItem $w={54}><Wifi size={36} strokeWidth={2.6} /></TrayItem>
          <TrayItem $w={46}><SpeakerTray /></TrayItem>
          <TrayItem $w={62}><BatteryTray /></TrayItem>
          <TrayClock>19:34</TrayClock>
        </Tray>
      </Taskbar>
    </Page>
  );
}
